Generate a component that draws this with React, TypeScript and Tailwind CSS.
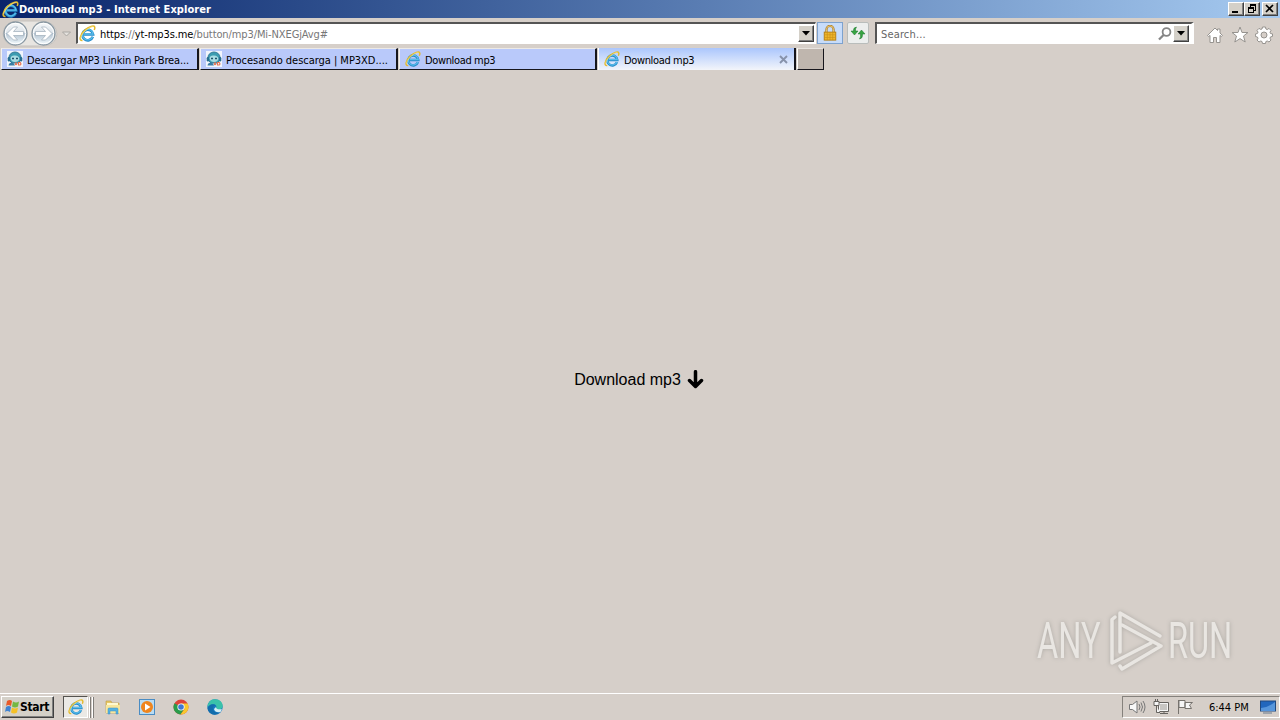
import type { ReactNode } from 'react';

interface Tab {
  id: number;
  title: string;
  icon: 'music' | 'ie';
  titleClass: string;
}

const tabs: Tab[] = [
  { id: 1, title: 'Descargar MP3 Linkin Park Brea...', icon: 'music', titleClass: 'tracking-[-0.15px]' },
  { id: 2, title: 'Procesando descarga | MP3XD....', icon: 'music', titleClass: 'tracking-[-0.03px]' },
  { id: 3, title: 'Download mp3', icon: 'ie', titleClass: 'tracking-[-0.36px]' },
];

const raised =
  'border border-t-white border-l-white border-r-[#404040] border-b-[#404040] shadow-[inset_-1px_-1px_0_#808080]';

function IeIcon({ size = 16 }: { size?: number }) {
  return (
    <svg width={size} height={size} viewBox="0 0 17 17" fill="none" className="shrink-0">
      <path d="M13.8 11.800A5.300 5.300 0 1 1 14.100 9.500H5" stroke="#268bc8" strokeWidth="2.700" />
      <path d="M13.700 11.700A5.300 5.300 0 1 1 14.100 9.200H5" stroke="#59bdec" strokeWidth="1.300" />
      <path
        d="M3.500 15.500C-.5 16 .8 9.800 5.600 5.400 10 1.300 15 .1 15.700 2.100c.3 1 0 1.900-.5 2.900"
        stroke="#e3b92c"
        strokeWidth="1.500"
      />
      <path d="M2 13.500C1.500 11.500 3.500 8.500 6.600 5.500 9.900 2.700 13 1.300 14.500 1.800" stroke="#fff09a" strokeWidth=".6" />
    </svg>
  );
}

function MusicIcon() {
  return (
    <svg width="16" height="16" viewBox="0 0 16 16" className="shrink-0">
      <rect width="16" height="16" fill="#f2f5fc" />
      <path d="M2 9V6.500a6 5.500 0 0 1 12 0V9l-3 3H5z" fill="#3c9cb0" stroke="#347a99" />
      <rect x=".7" y="6" width="2.500" height="4.500" rx="1.200" fill="#286e91" />
      <rect x="12.800" y="6" width="2.500" height="4.500" rx="1.200" fill="#286e91" />
      <path d="M3.500 7.500Q4 4 8 4.500q4 0 4.500 3.500-1 3-4.500 3T3.500 7.500" fill="#a9dce3" />
      <path d="M5 7.500h2M9 7.500h2" stroke="#1e536b" strokeWidth="1.600" />
      <path d="M1.500 14.500Q2 11 6 11.500l2 3z" fill="#397da4" />
      <path d="M8 11.500l2 2.500m0-2.500L8 14m3.500-2.500V14h1.700q1.500-1 0-2.500z" stroke="#e8714e" strokeWidth="1.100" fill="none" />
    </svg>
  );
}

function NavButtons() {
  return (
    <svg width="72" height="29" viewBox="0 0 72 29" className="shrink-0">
      <defs>
        <linearGradient id="navFill" x1="0" y1="0" x2="0" y2="1">
          <stop offset="0" stopColor="#f8fafb" />
          <stop offset=".45" stopColor="#dce3e9" />
          <stop offset=".5" stopColor="#b3c3d1" />
          <stop offset="1" stopColor="#f5fcff" />
        </linearGradient>
      </defs>
      <path d="M15 2h28q12 2 13 13-1 11-13 12H15Q3 26 2 15 3 3 15 2" fill="#e8e5e1" stroke="#c4c1bd" />
      {[14.5, 42.5].map((x) => (
        <g key={x} transform={`translate(${x} 14.500)`}>
          <circle r="11.500" fill="url(#navFill)" stroke="#8997a1" strokeWidth="1.300" />
          <circle r="10.200" fill="none" stroke="#fff" />
        </g>
      ))}
      <g fill="#fff" stroke="#9eacb9" strokeWidth=".7">
        <path d="M6 14.500l6.500-6.500h4L12.500 12.500h10v4H12.500l4 4.500h-4z" />
        <path d="M51 14.500L44.500 8h-4l4 4.500h-10v4h10l-4 4.500h4z" />
      </g>
      <path d="M61.500 13h8L65.500 17z" fill="#e5e2de" stroke="#aaa7a3" />
    </svg>
  );
}

function DropButton() {
  return (
    <div className={`flex h-[17px] w-4 shrink-0 items-center justify-center bg-[#d4d0c8] ${raised}`}>
      <svg width="8" height="5" viewBox="0 0 8 5">
        <path d="M0 0h8L4 4.500z" />
      </svg>
    </div>
  );
}

function CaptionButton({ children }: { children: ReactNode }) {
  return (
    <div className={`h-[14px] w-4 bg-[#d4d0c8] ${raised}`}>
      <svg width="14" height="12" viewBox="0 0 14 12" fill="none" stroke="#000" shapeRendering="crispEdges">
        {children}
      </svg>
    </div>
  );
}

function TitleBar() {
  return (
    <div className="flex h-[18px] items-center bg-linear-to-r from-[#0a246a] to-[#a6caf0] pr-[2px] pl-[2px]">
      <IeIcon size={17} />
      <span className="flex-1 pt-px font-bold tracking-[0.07px] whitespace-nowrap text-white">
        Download mp3 - Internet Explorer
      </span>
      <div className="flex">
        <CaptionButton>
          <path d="M3 9h6" strokeWidth="2" />
        </CaptionButton>
        <CaptionButton>
          <path d="M5 1.500h6M5 2.500h6M5.500 1v3M10.500 2v5M9 7.500h2M3 4.500h6M3 5.500h6M3.500 4v6M3 9.500h6M8.500 5v5" />
        </CaptionButton>
        <div className="ml-[2px]">
          <CaptionButton>
            <path d="M3 2l7 7M10 2L3 9" strokeWidth="1.700" shapeRendering="auto" />
          </CaptionButton>
        </div>
      </div>
    </div>
  );
}

function AddressBar() {
  return (
    <div className="flex h-[30px] items-center pl-px">
      <NavButtons />
      <div className="ml-[3px] flex h-[22px] w-[740px] items-center border-t-2 border-r border-b border-l-2 border-t-[#555] border-r-white border-b-white border-l-[#555] bg-white pr-px pl-[1px]">
        <IeIcon size={17} />
        <span className="ml-1 flex-1 pt-[2px] tracking-[-0.1px] whitespace-nowrap text-[#777]">
          <span className="text-black">https</span>://<span className="text-black">yt-mp3s.me</span>
          /button/mp3/Mi-NXEGjAvg#
        </span>
        <DropButton />
      </div>
      <div className="ml-[1px] flex h-[22px] w-[26px] items-center justify-center border border-[#7da2ce] bg-[#c7dcfa]">
        <svg width="16" height="16" viewBox="0 0 16 18">
          <path d="M4 9V5a4 4 0 0 1 8 0v4" fill="none" stroke="#a97a2a" strokeWidth="2.500" />
          <path d="M4 9V5a4 4 0 0 1 8 0v4" fill="none" stroke="#f1d37d" />
          <rect x="1.500" y="8" width="13" height="9" fill="#efb62c" stroke="#b37a0d" />
          <path d="M2 11h12M2 14h12M5 8v9M8 8v9M11 8v9" stroke="#c98f16" strokeWidth=".7" />
        </svg>
      </div>
      <div className="ml-1 flex h-[22px] w-[22px] items-center justify-center rounded-[2px] border border-[#b9bdbb] bg-[#eceeed]">
        <svg width="16" height="14" viewBox="0 0 16 14" fill="#38a442" stroke="#16762a" strokeWidth=".5">
          <path d="M6.500 1Q3 1.500 3.500 5H1l3.500 4L8 5H5.500Q5 3 6.500 1" />
          <path d="M9.500 13q3.500-.5 3-5H15l-3.500-4L8 8h2.500q.5 3-1 5" />
        </svg>
      </div>
      <div className="ml-[6px] flex h-[22px] w-[319px] items-center border-t-2 border-r-[3px] border-b border-l-2 border-t-[#555] border-r-white border-b-white border-l-[#555] bg-white pr-[2px]">
        <span className="ml-1 flex-1 pt-[2px] tracking-[0.15px] text-[#666]">Search...</span>
        <svg width="16" height="16" viewBox="0 0 16 16" fill="none" stroke="#858585" strokeWidth="1.800">
          <circle cx="9.500" cy="6" r="3.900" />
          <path d="M6.600 9L2 13.500" strokeWidth="2.300" />
        </svg>
        <DropButton />
      </div>
      <div className="ml-[12px] flex gap-[7px] pt-[3px]">
        <svg width="18" height="18" viewBox="0 0 18 18" fill="#fff" stroke="#96938f">
          <path d="M1.500 9.500L9 2l2.500 2.500V3H14v4l2.500 2.500-1.200 1L14 9.400V16.500h-3.500v-5h-3v5H4V9.400l-1.300 1.100z" />
        </svg>
        <svg width="18" height="18" viewBox="0 0 18 18" fill="#fff" stroke="#96938f">
          <path d="M9 1l2 5.500h6L12.500 10l1.700 6L9 12.600 3.800 16l1.700-6L1 6.500h6z" />
        </svg>
        <svg width="18" height="18" viewBox="0 0 18 18" fill="#fff" stroke="#96938f" className="-ml-px">
          <path d="M7.500 1h3l.4 2 1.300.6 1.800-1.200L16 4.500l-1 1.700.5 1.300 2 .4v2.500l-2 .5-.5 1.300 1 1.800-2 2-1.700-1-1.400.5-.4 2h-3l-.5-2-1.300-.5-1.700 1-2-2 1-1.700L2.400 11l-2-.5V8l2-.5.6-1.400-1-1.700 2-2 1.700 1L7 3z" />
          <circle cx="9" cy="9" r="3" fill="#d6cfc9" />
        </svg>
      </div>
    </div>
  );
}

function TabBar() {
  return (
    <div className="flex h-[22px] items-start pl-px">
      {tabs.map((tab) => (
        <div
          key={tab.id}
          className="mr-[1px] flex h-[22px] w-[198px] items-center border-t border-r-2 border-b border-l border-t-[#ece9e5] border-r-[#16161c] border-b-[#16161c] border-l-[#f4f2ef] bg-[#b9c9fa] pl-[5px]"
        >
          {tab.icon === 'music' ? <MusicIcon /> : <IeIcon />}
          <span className={`ml-1 pt-[3px] whitespace-nowrap ${tab.titleClass}`}>{tab.title}</span>
        </div>
      ))}
      <div className="flex h-[22px] w-[198px] items-center border-r-2 border-l border-r-[#16161c] border-l-white bg-linear-to-b from-[#abc6fc] to-[#f3f5fa] pr-[6px] pl-[5px]">
        <IeIcon />
        <span className="ml-1 flex-1 pt-[3px] tracking-[-0.36px]">Download mp3</span>
        <svg width="9" height="9" viewBox="0 0 9 9" stroke="#8792aa" strokeWidth="1.900">
          <path d="M1 1l7 7M8 1L1 8" />
        </svg>
      </div>
      <div className="ml-[1px] h-[22px] w-[27px] border-t border-r border-b border-l border-t-[#e7e3df] border-r-[#16161c] border-b-[#16161c] border-l-white bg-[#bfb6ae]" />
    </div>
  );
}

function Watermark() {
  return (
    <div className="absolute right-[48px] bottom-[20px] flex items-center font-['Roboto',sans-serif] text-[#e9e6e2] drop-shadow-[0_0_2px_#aaa7a2]">
      {/* The glyphs are narrowed, so each word gets a fixed box */}
      <div className="w-[70px]">
        <span className="inline-block origin-left scale-x-[.65] text-[50px] leading-[60px]">ANY</span>
      </div>
      <svg
        width="59"
        height="64"
        viewBox="0 0 59 64"
        fill="none"
        stroke="currentColor"
        strokeWidth="3.500"
        strokeLinecap="round"
        strokeLinejoin="round"
        className="shrink-0"
      >
        <path d="M8 8L5 10.500V54l39-20" />
        <path d="M13 43V4l40 23" />
        <path d="M15 16l39 21-39 23-2-3" />
      </svg>
      <div className="w-[66px] pl-[2px]">
        <span className="inline-block origin-left scale-x-[.65] text-[50px] leading-[60px]">RUN</span>
      </div>
    </div>
  );
}

function Taskbar() {
  return (
    <div className="flex h-[27px] items-center border-t border-white pl-[1px]">
      <div className={`flex h-[22px] w-[53px] items-center bg-[#d4d0c8] pl-[2px] ${raised}`}>
        <svg width="16" height="16" viewBox="0 0 16 16" className="shrink-0">
          <path d="M3 2q3-2 5 0L7 7Q4 5 2 7z" fill="#e95a28" />
          <path d="M9 2.500q3 2 6 0L14 7.500q-3 2-6 0z" fill="#75b843" />
          <path d="M2 8q3-2 5 0l-1 5q-3-2-5 0z" fill="#3f83d2" />
          <path d="M8 8.500q3 2 6 0l-1 5q-3 2-6 0z" fill="#f5c127" />
        </svg>
        <span className="text-[12px] font-bold tracking-[-0.35px]">Start</span>
      </div>
      <div className="ml-[9px] flex h-[22px] w-[25px] items-center justify-center border border-t-[#55534f] border-r-white border-b-white border-l-[#55534f] bg-[#ebe9e5]">
        <IeIcon />
      </div>
      <div className="ml-[1px] h-[21px] w-[2px] border-r border-[#7f7c78] bg-white" />
      <div className="ml-[1px] h-[21px] w-[2px] border-r border-[#7f7c78] bg-white" />
      <div className="ml-[11px] flex items-center gap-[18px]">
        <svg width="16" height="16" viewBox="0 0 16 16">
          <path d="M1 2h5l1 2h7v10H1z" fill="#e7c765" stroke="#bd9b42" strokeWidth=".6" />
          <path d="M2 4h11v3H2z" fill="#fff9cf" />
          <path d="M1 6h14v8H1z" fill="#f7e69c" />
          <path d="M3 15v-5q0-1 1-1h8q1 0 1 1v5h-2v-3H5v3z" fill="#54b2e1" stroke="#388fc6" strokeWidth=".5" />
        </svg>
        <svg width="16" height="16" viewBox="0 0 16 16">
          <rect x=".5" y=".5" width="15" height="15" fill="#b9dcf3" stroke="#4a8cc3" />
          <circle cx="8" cy="8" r="6" fill="#ef851e" />
          <path d="M6 4.500v7L11.500 8z" fill="#fff" />
        </svg>
        <svg width="16" height="16" viewBox="0 0 16 16">
          <circle cx="8" cy="8" r="7.500" fill="#dd4439" />
          <path d="M1.500 4.200A7.500 7.500 0 0 0 7.500 15.500L11.200 10z" fill="#299c4b" />
          <path d="M8 4.500h6.600A7.500 7.500 0 0 1 7.500 15.500l4-5.500z" fill="#f8c92d" />
          <circle cx="8" cy="8" r="3.600" fill="#fff" />
          <circle cx="8" cy="8" r="2.800" fill="#3f78d2" />
        </svg>
        <svg width="16" height="16" viewBox="0 0 16 16">
          <circle cx="8" cy="8" r="7.700" fill="#1878bf" />
          <path d="M.4 8C1 2 5 .3 8 .3c5 0 8 3.600 7.700 7C15.500 11 10 11.500 9 9.500 11 6 6 3 .4 8" fill="#3ac2aa" />
          <path d="M.5 9Q4 3 9 6.500 5 7 6 11q2 4 7 2Q8 18 3 14 .5 11.500.5 9" fill="#126dac" />
          <path d="M9 8q0 3 6 2.200L13.500 13Q8 14 7 10z" fill="#d6eff6" />
        </svg>
      </div>
      <div className="ml-auto flex h-[22px] w-[158px] items-center border border-t-[#85817c] border-r-white border-b-white border-l-[#85817c] pl-[6px]">
        <svg width="17" height="16" viewBox="0 0 17 16" fill="#f8f8f8" stroke="#777" className="shrink-0">
          <path d="M.5 5.500h3L8 2v12l-4.500-3.500h-3z" />
          <path d="M10 5q2 3 0 6M12 3.500q3 4.500 0 9M14 2q4 6 0 12" fill="none" />
        </svg>
        <svg width="17" height="16" viewBox="0 0 17 16" fill="#f5f5f5" stroke="#66635f" className="ml-[7px] shrink-0">
          <path d="M5.500 3.500h10v9h-10zM7 14.500h8M11 13v1" />
          <path d="M7 5h7v6H7z" fill="#c8c6c3" stroke="none" />
          <path d="M1 2.500h5v4H1zM2.500 0v2M4.500 0v2M3.500 7v6.500H7" />
        </svg>
        <svg width="17" height="16" viewBox="0 0 17 16" fill="#f5f5f5" stroke="#77736e" className="ml-[7px] shrink-0">
          <path d="M1.500 1v14M2 1.500h6v7H2zM8 3.500h7.500L12.500 6l2 3.500H8z" />
        </svg>
        <span className="ml-[15px] pt-px tracking-[-0.02px] whitespace-nowrap">6:44 PM</span>
        <svg width="16" height="16" viewBox="0 0 16 16" className="mr-[3px] ml-auto shrink-0">
          <rect x=".5" y="2" width="15" height="10" fill="#2267bd" stroke="#21497e" />
          <path d="M1 9Q9 8 15 3v9H1z" fill="#5796db" />
          <path d="M3 14h9" stroke="#66788d" />
        </svg>
      </div>
    </div>
  );
}

export default function App() {
  return (
    <div className="flex h-[720px] w-[1280px] flex-col overflow-hidden bg-[#d6cfc9] font-['DejaVu_Sans_Condensed','DejaVu_Sans',sans-serif] text-[11px] leading-[14px] text-black">
      <TitleBar />
      <AddressBar />
      <TabBar />
      {/* Page content */}
      <main className="relative flex flex-1 items-center justify-center pr-[2px] pb-1">
        <a href="#" className="flex items-center gap-[6px] font-['Liberation_Sans',sans-serif] text-[16px] leading-5">
          Download mp3
          <svg width="17" height="20" viewBox="0 0 17 20" fill="none" stroke="#000" strokeWidth="3.500" strokeLinecap="round" strokeLinejoin="round">
            <path d="M8.500 1.700v14.500M2.500 10.500l6 6 6-6" />
          </svg>
        </a>
        <Watermark />
      </main>
      <Taskbar />
    </div>
  );
}
